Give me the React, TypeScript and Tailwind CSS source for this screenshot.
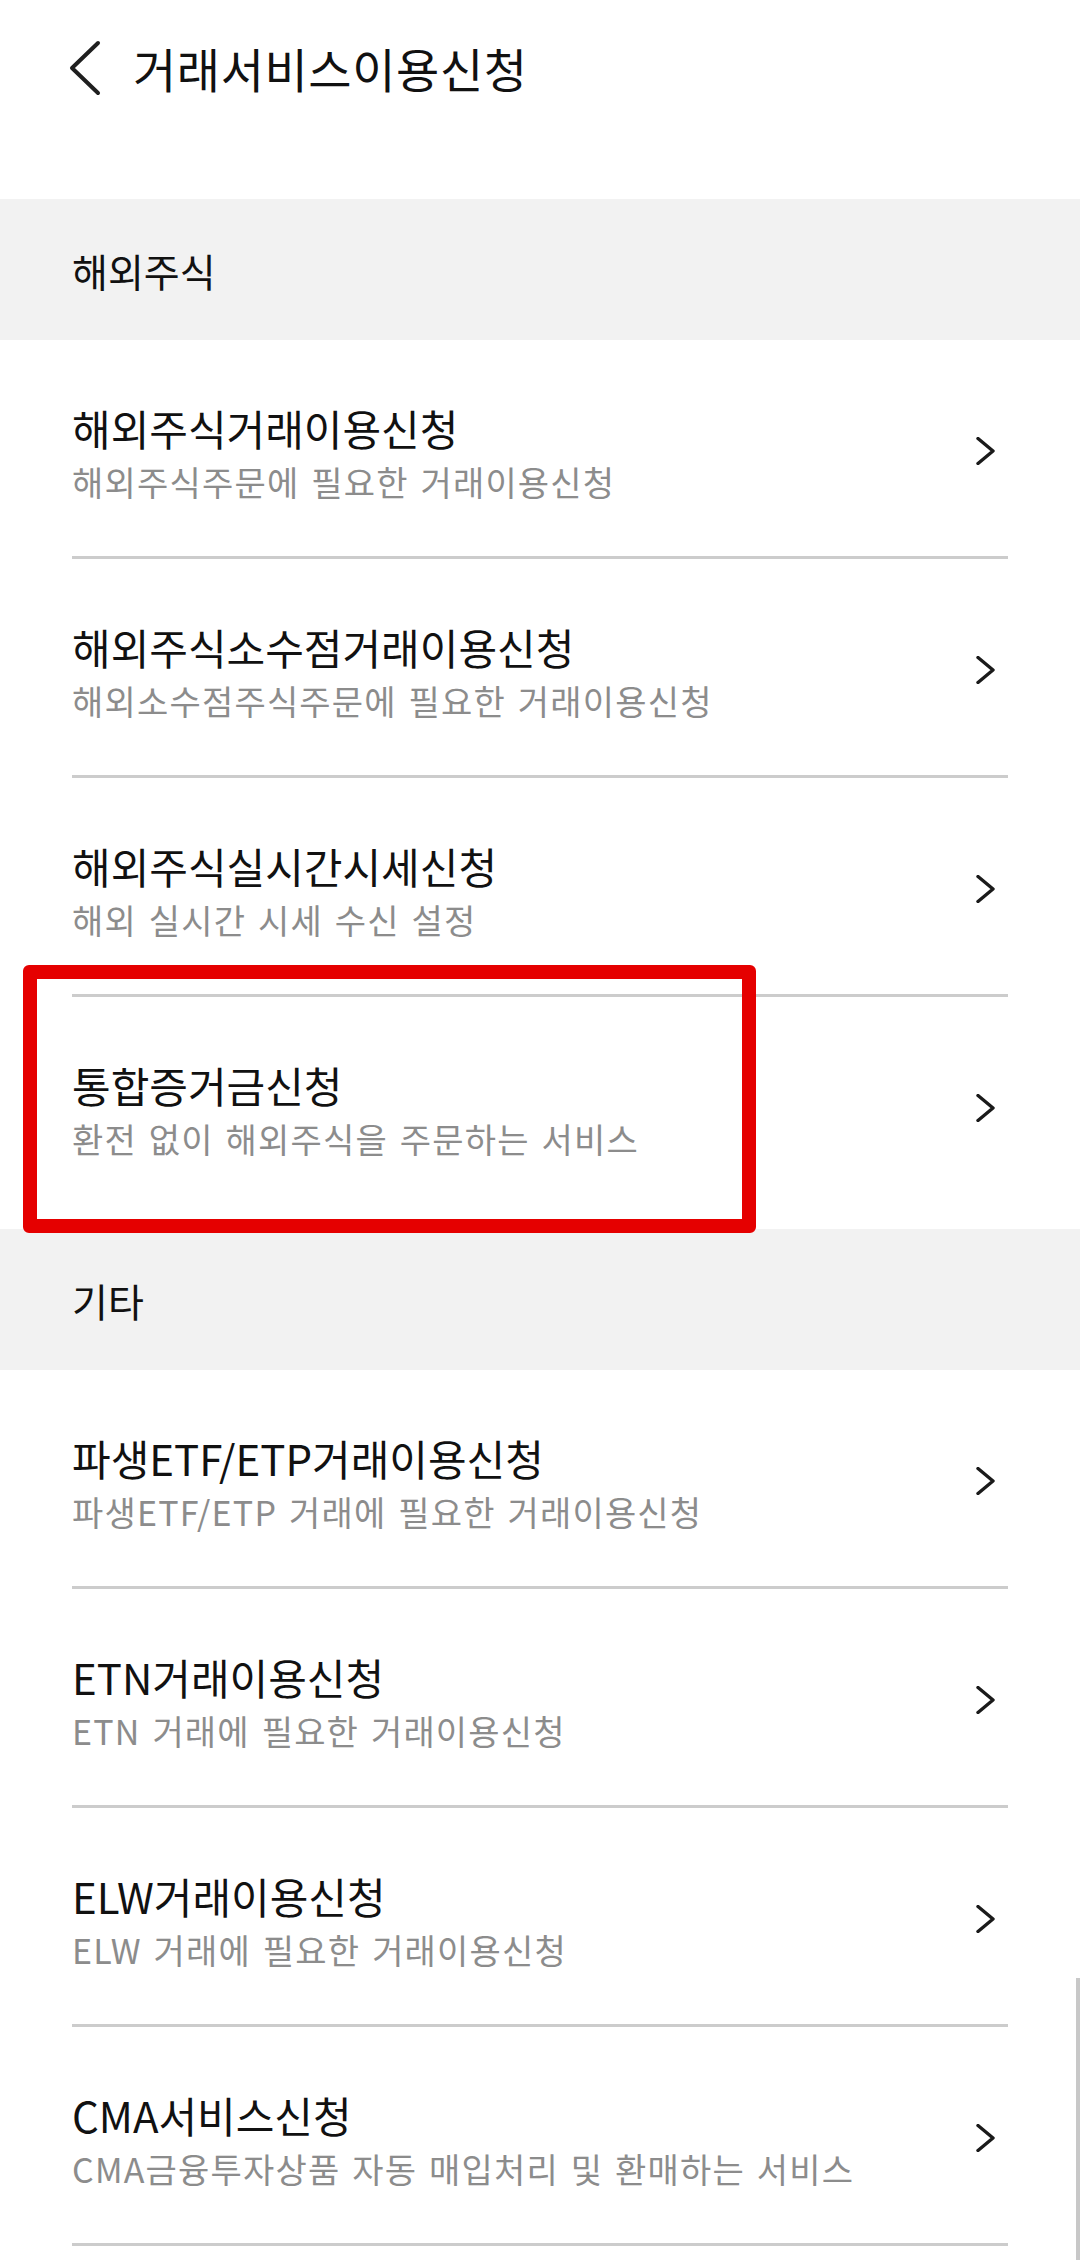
import React from "react";

const FONT = { fontFamily: '"Noto Sans CJK KR", "Noto Sans", sans-serif' };

type Item = { title: string; sub: string; last?: boolean; tall?: boolean };

const overseas: Item[] = [
  { title: "해외주식거래이용신청", sub: "해외주식주문에 필요한 거래이용신청" },
  { title: "해외주식소수점거래이용신청", sub: "해외소수점주식주문에 필요한 거래이용신청" },
  { title: "해외주식실시간시세신청", sub: "해외 실시간 시세 수신 설정" },
  { title: "통합증거금신청", sub: "환전 없이 해외주식을 주문하는 서비스", last: true, tall: true },
];

const others: Item[] = [
  { title: "파생ETF/ETP거래이용신청", sub: "파생ETF/ETP 거래에 필요한 거래이용신청" },
  { title: "ETN거래이용신청", sub: "ETN 거래에 필요한 거래이용신청" },
  { title: "ELW거래이용신청", sub: "ELW 거래에 필요한 거래이용신청" },
  { title: "CMA서비스신청", sub: "CMA금융투자상품 자동 매입처리 및 환매하는 서비스" },
];

function Chevron() {
  return (
    <svg width="20" height="28" viewBox="0 0 20 28" fill="none">
      <polyline
        points="2,1.5 17,14 2,26.5"
        stroke="#1a1a1a"
        strokeWidth="3.4"
        strokeLinecap="round"
        strokeLinejoin="round"
      />
    </svg>
  );
}

function Row({ item }: { item: Item }) {
  return (
    <div>
      <div
        className={
          "flex items-start justify-between pl-[72px] pr-[84px] pt-[64px] " +
          (item.tall ? "h-[232px]" : "h-[216px]")
        }
      >
        <div className="flex flex-col gap-[10px]">
          <div className="text-[42px] leading-[48px] tracking-[0px] text-[#111111]">{item.title}</div>
          <div className="text-[34px] leading-[40px] tracking-[1.2px] text-[#8c8c8c] [word-spacing:3px]">
            {item.sub}
          </div>
        </div>
        <div className="mt-[33px]">
          <Chevron />
        </div>
      </div>
      {!item.last && <div className="mx-[72px] h-[3px] bg-[#cccccc]" />}
    </div>
  );
}

function Section({ label }: { label: string }) {
  return (
    <div className="flex h-[141px] items-center bg-[#f2f2f2] px-[72px]">
      <span className="text-[39px] leading-[44px] text-[#111111]">{label}</span>
    </div>
  );
}

export default function App() {
  return (
    <div className="relative min-h-[2260px] w-[1080px] overflow-hidden bg-white" style={FONT}>
      <div className="h-[199px]">
        <div className="flex h-[136px] items-center pl-[68px]">
          <svg width="34" height="56" viewBox="0 0 34 56" fill="none">
            <polyline
              points="30,3 4,28 30,53"
              stroke="#1f1f1f"
              strokeWidth="4"
              strokeLinecap="round"
              strokeLinejoin="round"
            />
          </svg>
          <span className="ml-[31px] text-[47px] leading-[54px] tracking-[0.6px] text-[#111111]">
            거래서비스이용신청
          </span>
        </div>
      </div>

      <Section label="해외주식" />
      {overseas.map((it) => (
        <Row key={it.title} item={it} />
      ))}

      <Section label="기타" />
      {others.map((it) => (
        <Row key={it.title} item={it} />
      ))}

      {/* highlight box */}
      <div className="pointer-events-none absolute left-[23px] top-[965px] h-[268px] w-[733px] rounded-[6px] border-[14px] border-[#e50000]" />

      {/* scrollbar */}
      <div className="absolute right-0 top-[1978px] h-[282px] w-[4px] bg-[#c8c8c8]" />
    </div>
  );
}
